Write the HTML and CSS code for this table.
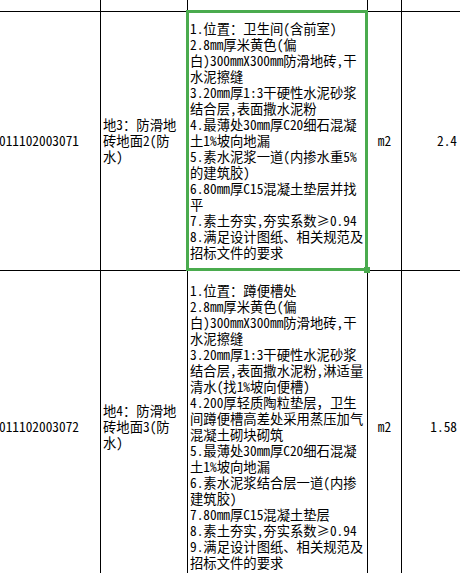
FILE: index.html
```html
<!DOCTYPE html>
<html lang="zh-CN">
<head>
<meta charset="utf-8">
<title>清单</title>
<link rel="stylesheet" href="styles.css">
</head>
<body>
<div class="sheet">
  <div class="cell"></div>
  <div class="cell"></div>
  <div class="cell"></div>
  <div class="cell"></div>
  <div class="cell"></div>

  <div class="cell code">011102003071</div>
  <div class="cell name">地3：防滑地<br>砖地面2(防<br>水)</div>
  <div class="cell desc selected">
    <div class="txt">1.位置：卫生间(含前室)<br>2.8mm厚米黄色(偏<br>白)300mmX300mm防滑地砖,干<br>水泥擦缝<br>3.20mm厚1:3干硬性水泥砂浆<br>结合层,表面撒水泥粉<br>4.最薄处30mm厚C20细石混凝<br>土1%坡向地漏<br>5.素水泥浆一道(内掺水重5%<br>的建筑胶)<br>6.80mm厚C15混凝土垫层并找<br>平<br>7.素土夯实,夯实系数≥0.94<br>8.满足设计图纸、相关规范及<br>招标文件的要求</div>
    <div class="sel"><span class="handle"></span></div>
  </div>
  <div class="cell unit">m2</div>
  <div class="cell qty">2.4</div>

  <div class="cell code">011102003072</div>
  <div class="cell name">地4：防滑地<br>砖地面3(防<br>水)</div>
  <div class="cell desc">
    <div class="txt">1.位置：蹲便槽处<br>2.8mm厚米黄色(偏<br>白)300mmX300mm防滑地砖,干<br>水泥擦缝<br>3.20mm厚1:3干硬性水泥砂浆<br>结合层,表面撒水泥粉,淋适量<br>清水(找1%坡向便槽)<br>4.200厚轻质陶粒垫层，卫生<br>间蹲便槽高差处采用蒸压加气<br>混凝土砌块砌筑<br>5.最薄处30mm厚C20细石混凝<br>土1%坡向地漏<br>6.素水泥浆结合层一道(内掺<br>建筑胶)<br>7.80mm厚C15混凝土垫层<br>8.素土夯实,夯实系数≥0.94<br>9.满足设计图纸、相关规范及<br>招标文件的要求</div>
  </div>
  <div class="cell unit">m2</div>
  <div class="cell qty">1.58</div>
</div>
</body>
</html>
```
FILE: styles.css
```css
html, body {
  margin: 0;
  padding: 0;
  background: #fff;
  overflow: hidden;
}

.sheet {
  display: grid;
  grid-template-columns: 107px 87px 180px 34px 60px;
  grid-template-rows: 12px 259px 312px;
  margin-left: -6px;
  font-family: "Noto Sans Mono CJK SC", "Noto Sans CJK SC", sans-serif;
  font-size: 13.33px;
  line-height: 16px;
  color: #000;
}

.cell {
  box-sizing: border-box;
  border-right: 1px solid #000;
  border-bottom: 1px solid #000;
  display: flex;
  align-items: center;
  white-space: nowrap;
}

.code {
  padding-left: 5px;
}

.name {
  padding-left: 2px;
}

.desc {
  padding-left: 2px;
}

.selected {
  position: relative;
}

.sel {
  position: absolute;
  top: -2px;
  left: -2px;
  right: -1px;
  bottom: -1px;
  border: 3px solid #4aab4e;
  pointer-events: none;
}

.handle {
  position: absolute;
  right: -5px;
  bottom: -5px;
  width: 6px;
  height: 6px;
  background: #4aab4e;
}

.unit {
  justify-content: center;
}

.qty {
  justify-content: flex-end;
  padding-right: 4px;
}
```
